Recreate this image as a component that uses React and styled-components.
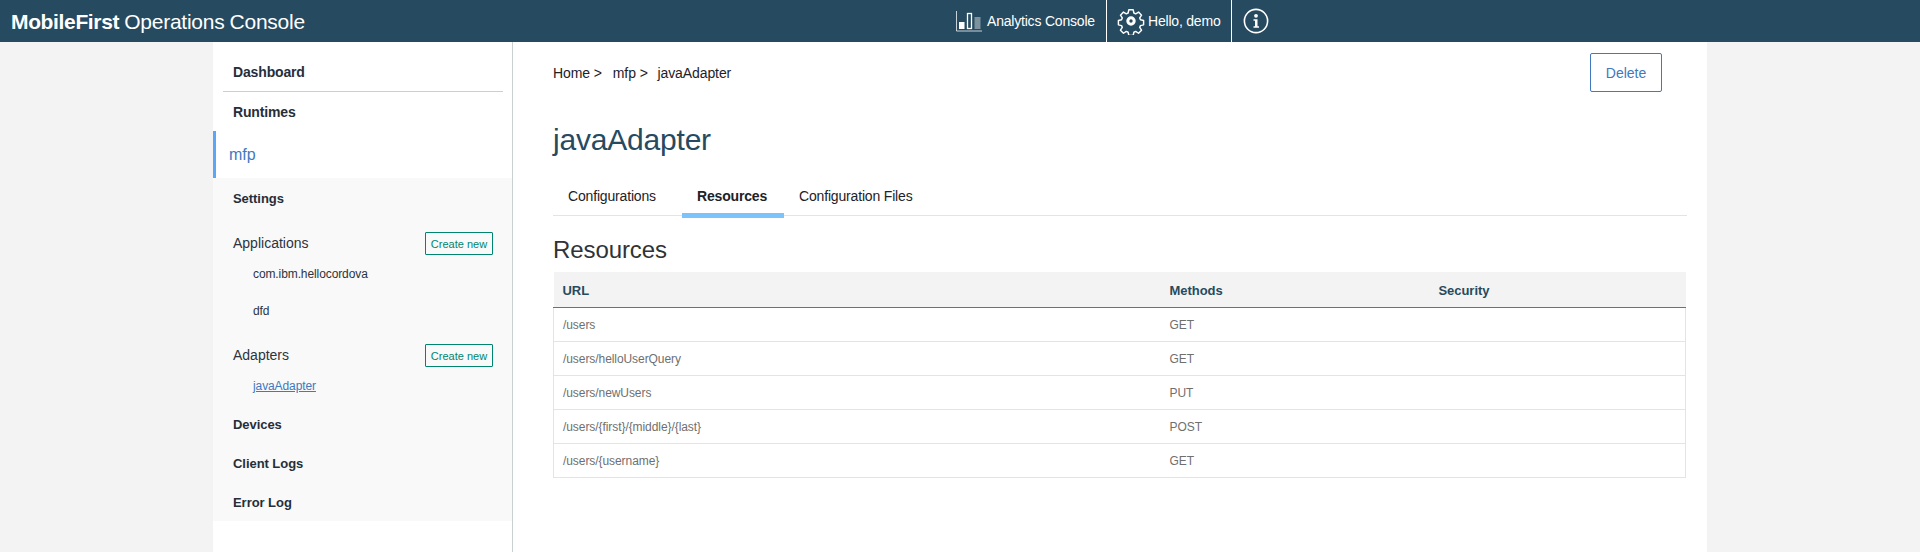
import styled, { createGlobalStyle } from "styled-components";

const GlobalStyle = createGlobalStyle`
  html, body {
    margin: 0;
    padding: 0;
    height: 100%;
    background: #f3f3f3;
    font-family: "Liberation Sans", Arial, sans-serif;
  }
`;

const Header = styled.header`
  height: 42px;
  background: #264a60;
  color: #fff;
  display: flex;
  align-items: stretch;
`;

const Brand = styled.div`
  width: 955px;
  padding-left: 11px;
  box-sizing: border-box;
  font-size: 21px;
  line-height: 43px;
  letter-spacing: -0.25px;
  word-spacing: -0.5px;
  b {
    font-weight: 700;
    letter-spacing: -0.35px;
  }
`;

const HeaderItem = styled.div`
  display: flex;
  align-items: center;
  gap: ${(p) => p.$gap || 5}px;
  width: ${(p) => p.$width}px;
  box-sizing: border-box;
  padding-left: ${(p) => p.$left || 0}px;
  font-size: 14px;
  border-right: ${(p) => (p.$divider ? "1px solid #fff" : "none")};
  letter-spacing: -0.2px;
`;

const Shell = styled.div`
  width: 1494px;
  height: 510px;
  margin-left: 213px;
  display: flex;
  background: #fff;
`;

const Sidebar = styled.aside`
  width: 300px;
  flex-shrink: 0;
  box-sizing: border-box;
  border-right: 1px solid #c9d0d0;
  display: flex;
  flex-direction: column;
`;

const TopLink = styled.div`
  margin: 0 9px 0 10px;
  padding-left: 10px;
  height: ${(p) => p.$height}px;
  line-height: ${(p) => p.$line}px;
  font-size: 14px;
  font-weight: 700;
  letter-spacing: -0.15px;
  color: #252e3a;
  border-bottom: ${(p) => (p.$rule ? "1px solid #c9d0d0" : "none")};
`;

const RuntimeRow = styled.div`
  height: 47px;
  border-left: 3px solid #5aa7f8;
  padding-left: 13px;
  font-size: 16px;
  line-height: 48px;
  color: #4178be;
`;

const SubNav = styled.div`
  background: #f9f9f9;
  height: 343px;
  padding: 0 19px 0 20px;
  display: flex;
  flex-direction: column;
`;

const SubHeading = styled.div`
  font-size: 13px;
  font-weight: 700;
  letter-spacing: -0.05px;
  color: #252e3a;
  height: ${(p) => p.$height}px;
  line-height: ${(p) => p.$line}px;
`;

const GroupRow = styled.div`
  display: flex;
  justify-content: space-between;
  align-items: center;
  height: 23px;
  margin-top: ${(p) => p.$top}px;
  font-size: 14px;
  color: #2b3440;
`;

const GroupLabel = styled.span`
  position: relative;
  top: -1px;
`;

const CreateButton = styled.button`
  width: 68px;
  height: 23px;
  padding: 0;
  box-sizing: border-box;
  border: 1px solid #00856f;
  border-radius: 1px;
  background: transparent;
  color: #00856f;
  font: 11px "Liberation Sans", Arial, sans-serif;
`;

const AppLink = styled.div`
  padding-left: 20px;
  font-size: 12px;
  letter-spacing: -0.1px;
  height: ${(p) => p.$height}px;
  line-height: ${(p) => p.$line}px;
  color: ${(p) => (p.$active ? "#4178be" : "#2b3440")};
  text-decoration: ${(p) => (p.$active ? "underline" : "none")};
`;

const Main = styled.main`
  flex: 1;
  min-width: 0;
  padding: 11px 20px 0 40px;
  box-sizing: border-box;
`;

const TopRow = styled.div`
  display: flex;
  justify-content: space-between;
  height: 39px;
`;

const Breadcrumb = styled.div`
  display: flex;
  font-size: 14px;
  line-height: 40px;
  color: #1d2228;
  letter-spacing: -0.1px;
`;

const Crumb = styled.span`
  margin-right: ${(p) => p.$gap || 0}px;
`;

const DeleteButton = styled.button`
  width: 72px;
  height: 39px;
  margin-right: 25px;
  box-sizing: border-box;
  padding: 0;
  border: 1px solid #4178be;
  border-radius: 2px;
  background: #fff;
  color: #4178be;
  font: 14px "Liberation Sans", Arial, sans-serif;
`;

const Title = styled.h1`
  margin: 28px 0 0;
  height: 42px;
  font-size: 30px;
  line-height: 40px;
  font-weight: 400;
  color: #264a60;
  letter-spacing: -0.2px;
`;

const Tabs = styled.div`
  display: flex;
  margin-top: 19px;
  height: 34px;
  border-bottom: 1px solid #dfe6e6;
`;

const Tab = styled.div`
  box-sizing: border-box;
  width: ${(p) => p.$width}px;
  height: 37px;
  padding: 5px 0 0 15px;
  font-size: 14px;
  line-height: 20px;
  letter-spacing: -0.17px;
  color: #1d2228;
  font-weight: ${(p) => (p.$active ? 700 : 400)};
  border-bottom: 5px solid ${(p) => (p.$active ? "#7cc2fb" : "transparent")};
`;

const SectionTitle = styled.h2`
  margin: 19px 0 0;
  height: 37px;
  font-size: 24px;
  line-height: 30px;
  font-weight: 400;
  color: #2f3338;
  letter-spacing: -0.1px;
`;

const Table = styled.table`
  width: 1133px;
  border-collapse: collapse;
  table-layout: fixed;
`;

const HeadCell = styled.th`
  height: 33px;
  padding: 2px 0 0 ${(p) => p.$pad || 0}px;
  background: #f3f3f3;
  border-bottom: 1px solid #4178be;
  text-align: left;
  font-size: 13px;
  font-weight: 700;
  letter-spacing: -0.05px;
  color: #264a60;
  width: ${(p) => p.$width}px;
`;

const Cell = styled.td`
  height: 33px;
  padding: 0 0 0 ${(p) => p.$pad || 0}px;
  font-size: 12px;
  letter-spacing: -0.07px;
  color: #6f6f6f;
  border-bottom: 1px solid #dfe6e6;
  &:first-child {
    border-left: 1px solid #dfe6e6;
  }
  &:last-child {
    border-right: 1px solid #dfe6e6;
  }
`;

const AnalyticsIcon = () => (
  <svg width="26" height="22" viewBox="0 0 26 22" fill="none">
    <path d="M.5 1v20h25.500" stroke="#fff" strokeWidth="1" opacity=".75" />
    <rect x="3" y="12" width="5.500" height="7" fill="#fff" />
    <rect x="11.500" y="3.500" width="4" height="15" stroke="#fff" strokeWidth="1.300" />
    <path d="M18.500 8h6M18.500 10h6M18.500 12h6M18.500 14h6M18.500 16h6M18.500 18h6" stroke="#fff" strokeWidth="1" opacity=".8" />
  </svg>
);

const GearIcon = () => (
  <svg width="28" height="28" viewBox="0 0 28 28" fill="none" stroke="#fff">
    <path
      strokeWidth="1.600"
      strokeLinejoin="round"
      d="M11.600 1.500h4.800l.8 3.600 2 .9 3.200-1.900 3.300 3.400-2 3.100.8 2 3.500.9v4.800l-3.500.8-.8 2 2 3.100-3.300 3.400-3.200-2-2 .9-.8 3.500h-4.800l-.8-3.500-2-.9-3.200 2-3.300-3.400 2-3.100-.8-2-3.500-.8v-4.800l3.500-.9.8-2-2-3.100 3.300-3.400 3.200 1.900 2-.9z"
      transform="translate(1.400 1.400) scale(.9)"
    />
    <circle cx="14" cy="14" r="3.200" strokeWidth="3" />
  </svg>
);

const InfoIcon = () => (
  <svg width="26" height="26" viewBox="0 0 26 26" fill="none">
    <circle cx="13" cy="13" r="11.600" stroke="#fff" strokeWidth="1.600" />
    <circle cx="13" cy="7.800" r="1.900" fill="#fff" />
    <path d="M10.500 11.200h4v7h1.500v1.600h-5.500v-1.600h1.500v-5.400h-1.500z" fill="#fff" />
  </svg>
);

const resources = [
  ["/users", "GET"],
  ["/users/helloUserQuery", "GET"],
  ["/users/newUsers", "PUT"],
  ["/users/{first}/{middle}/{last}", "POST"],
  ["/users/{username}", "GET"],
];

export default function App() {
  return (
    <>
      <GlobalStyle />
      <Header>
        <Brand>
          <b>MobileFirst</b> Operations Console
        </Brand>
        <HeaderItem $width={152} $left={1} $divider>
          <AnalyticsIcon />
          Analytics Console
        </HeaderItem>
        <HeaderItem $width={125} $left={10} $gap={3} $divider>
          <GearIcon />
          Hello, demo
        </HeaderItem>
        <HeaderItem $width={60} $left={11}>
          <InfoIcon />
        </HeaderItem>
      </Header>
      <Shell>
        <Sidebar>
          <TopLink $height={49} $line={60} $rule>
            Dashboard
          </TopLink>
          <TopLink $height={39} $line={41}>
            Runtimes
          </TopLink>
          <RuntimeRow>mfp</RuntimeRow>
          <SubNav>
            <SubHeading $height={40} $line={42}>
              Settings
            </SubHeading>
            <GroupRow $top={14}>
              <GroupLabel>Applications</GroupLabel>
              <CreateButton>Create new</CreateButton>
            </GroupRow>
            <AppLink $height={37} $line={39}>
              com.ibm.hellocordova
            </AppLink>
            <AppLink $height={37} $line={39}>
              dfd
            </AppLink>
            <GroupRow $top={15}>
              <GroupLabel>Adapters</GroupLabel>
              <CreateButton>Create new</CreateButton>
            </GroupRow>
            <AppLink $active $height={38} $line={38}>
              javaAdapter
            </AppLink>
            <SubHeading $height={39} $line={39}>
              Devices
            </SubHeading>
            <SubHeading $height={39} $line={39}>
              Client Logs
            </SubHeading>
            <SubHeading $height={38} $line={39}>
              Error Log
            </SubHeading>
          </SubNav>
        </Sidebar>
        <Main>
          <TopRow>
            <Breadcrumb>
              <Crumb $gap={11}>Home &gt;</Crumb>
              <Crumb $gap={6}>mfp &gt;</Crumb>
              <Crumb>&nbsp;javaAdapter</Crumb>
            </Breadcrumb>
            <DeleteButton>Delete</DeleteButton>
          </TopRow>
          <Title>javaAdapter</Title>
          <Tabs>
            <Tab $width={129}>Configurations</Tab>
            <Tab $width={102} $active>
              Resources
            </Tab>
            <Tab $width={145}>Configuration Files</Tab>
          </Tabs>
          <SectionTitle>Resources</SectionTitle>
          <Table>
            <thead>
              <tr>
                <HeadCell $width={598} $pad={9}>URL</HeadCell>
                <HeadCell $width={269} $pad={9}>Methods</HeadCell>
                <HeadCell>Security</HeadCell>
              </tr>
            </thead>
            <tbody>
              {resources.map(([url, method]) => (
                <tr key={url}>
                  <Cell $pad={9}>{url}</Cell>
                  <Cell $pad={9}>{method}</Cell>
                  <Cell />
                </tr>
              ))}
            </tbody>
          </Table>
        </Main>
      </Shell>
    </>
  );
}
